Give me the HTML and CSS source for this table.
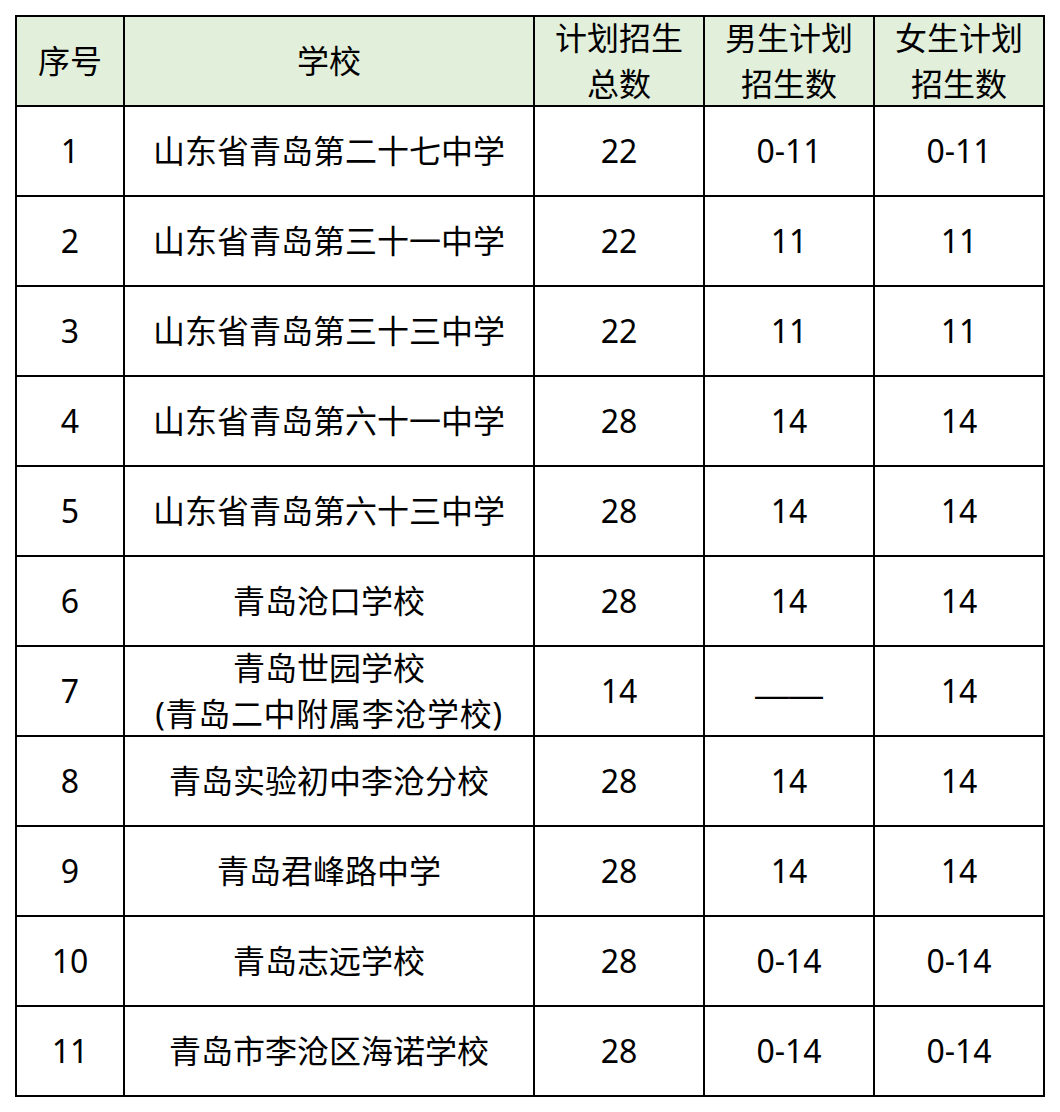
FILE: index.html
```html
<!DOCTYPE html>
<html lang="zh-CN">
<head>
<meta charset="utf-8">
<title>招生计划</title>
<link rel="stylesheet" href="styles.css">
</head>
<body>
<div class="sheet">
  <div class="cell head">序号</div>
  <div class="cell head">学校</div>
  <div class="cell head">计划招生<br>总数</div>
  <div class="cell head">男生计划<br>招生数</div>
  <div class="cell head">女生计划<br>招生数</div>

  <div class="cell">1</div><div class="cell">山东省青岛第二十七中学</div><div class="cell">22</div><div class="cell">0-11</div><div class="cell">0-11</div>
  <div class="cell">2</div><div class="cell">山东省青岛第三十一中学</div><div class="cell">22</div><div class="cell">11</div><div class="cell">11</div>
  <div class="cell">3</div><div class="cell">山东省青岛第三十三中学</div><div class="cell">22</div><div class="cell">11</div><div class="cell">11</div>
  <div class="cell">4</div><div class="cell">山东省青岛第六十一中学</div><div class="cell">28</div><div class="cell">14</div><div class="cell">14</div>
  <div class="cell">5</div><div class="cell">山东省青岛第六十三中学</div><div class="cell">28</div><div class="cell">14</div><div class="cell">14</div>
  <div class="cell">6</div><div class="cell">青岛沧口学校</div><div class="cell">28</div><div class="cell">14</div><div class="cell">14</div>
  <div class="cell">7</div><div class="cell">青岛世园学校<br><span class="wide">(青岛二中附属李沧学校)</span></div><div class="cell">14</div><div class="cell"><span class="dash">——</span></div><div class="cell">14</div>
  <div class="cell">8</div><div class="cell">青岛实验初中李沧分校</div><div class="cell">28</div><div class="cell">14</div><div class="cell">14</div>
  <div class="cell">9</div><div class="cell">青岛君峰路中学</div><div class="cell">28</div><div class="cell">14</div><div class="cell">14</div>
  <div class="cell">10</div><div class="cell">青岛志远学校</div><div class="cell">28</div><div class="cell">0-14</div><div class="cell">0-14</div>
  <div class="cell">11</div><div class="cell">青岛市李沧区海诺学校</div><div class="cell">28</div><div class="cell">0-14</div><div class="cell">0-14</div>
</div>
</body>
</html>
```
FILE: styles.css
```css
html, body {
  margin: 0;
  padding: 0;
  background: #ffffff;
}

body {
  font-family: "Noto Sans", "Noto Sans CJK SC", sans-serif;
  color: #000000;
}

.sheet {
  margin: 15px 0 0 15px;
  width: 1030px;
  box-sizing: border-box;
  padding: 2px;
  background: #000000;
  display: grid;
  grid-template-columns: 106px 408px 168px 168px 168px;
  grid-auto-rows: 88px;
  gap: 2px;
}

.cell {
  background: #ffffff;
  display: flex;
  flex-direction: column;
  align-items: center;
  justify-content: center;
  text-align: center;
  font-size: 32px;
  line-height: 46px;
}

.head {
  background: #e2efda;
}

.wide {
  letter-spacing: 0.7px;
}

.dash {
  font-family: "Liberation Sans", sans-serif;
  font-size: 34px;
  line-height: 46px;
  position: relative;
  top: 3px;
}
```
